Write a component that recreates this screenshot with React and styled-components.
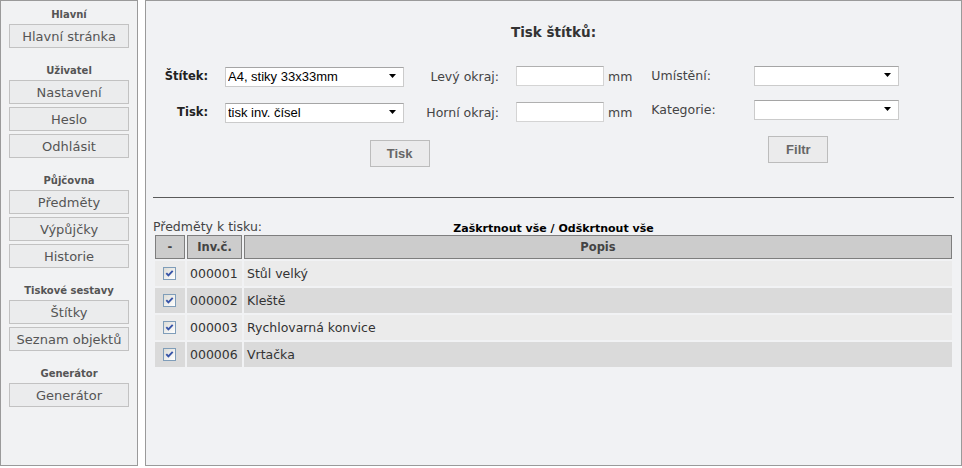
import React from 'react';
import styled, { createGlobalStyle } from 'styled-components';

const GlobalStyle = createGlobalStyle`
  html, body {
    margin: 0;
    padding: 0;
    background: #ffffff;
    font-family: "DejaVu Sans", Verdana, sans-serif;
  }
  * { box-sizing: border-box; }
`;

const Page = styled.div`
  display: flex;
  gap: 7px;
  height: 466px;
`;

const Sidebar = styled.nav`
  width: 138px;
  flex-shrink: 0;
  background: #f1f2f3;
  border: 1px solid #9a9a9a;
  padding: 7px 0 0;
  display: flex;
  flex-direction: column;
  gap: 16px;
`;

const Section = styled.div`
  display: flex;
  flex-direction: column;
  align-items: center;
  gap: 3px;
`;

const SectionTitle = styled.div`
  font-size: 10px;
  font-weight: bold;
  line-height: 14px;
  height: 14px;
  color: #555;
  margin-bottom: -1px;
`;

const NavButton = styled.button`
  width: 120px;
  height: 24px;
  padding: 0;
  background: #ebeced;
  border: 1px solid #c2c2c2;
  font-family: "DejaVu Sans", Verdana, sans-serif;
  font-size: 13px;
  color: #555;
  cursor: pointer;
`;

const Main = styled.main`
  flex: 1;
  background: #f1f2f4;
  border: 1px solid #9a9a9a;
  padding: 22px 7px 0;
`;

const Title = styled.h1`
  margin: 0;
  text-align: center;
  font-size: 13.5px;
  line-height: 18px;
  font-weight: bold;
  color: #333;
`;

const Forms = styled.div`
  display: flex;
  align-items: flex-start;
  gap: 19px;
  margin-top: 25px;
  padding-left: 14px;
  height: 101px;
`;

const LeftForm = styled.div`
  display: grid;
  grid-template-columns: 41px 179px 78px auto;
  grid-template-rows: 20px 20px auto;
  column-gap: 17px;
  row-gap: 16px;
  align-items: center;
`;

const RightForm = styled.div`
  display: grid;
  grid-template-columns: 103px 145px;
  grid-template-rows: 20px 20px auto;
  row-gap: 14px;
  align-items: center;
  margin-top: -1px;
`;

const BoldLabel = styled.label`
  justify-self: end;
  white-space: nowrap;
  font-size: 11.5px;
  font-weight: bold;
  color: #222;
`;

const Label = styled.label`
  justify-self: ${p => (p.$left ? 'start' : 'end')};
  white-space: nowrap;
  font-size: 12.5px;
  color: #444;
`;

const SelectWrap = styled.div`
  position: relative;
  height: 20px;
`;

const Select = styled.select`
  appearance: none;
  width: 100%;
  height: 20px;
  margin: 0;
  padding: 0 0 0 2px;
  background: #fff;
  border: 1px solid #cbcbcb;
  border-top-color: #a5a5a5;
  border-radius: 0;
  font-family: "Liberation Sans", Arial, sans-serif;
  font-size: 13px;
  color: #000;
`;

const Arrow = styled.svg`
  position: absolute;
  right: 8px;
  top: 8px;
  pointer-events: none;
`;

const InputCell = styled.div`
  display: flex;
  align-items: center;
  gap: 4px;
`;

const Input = styled.input`
  width: 88px;
  height: 20px;
  margin: 0;
  background: #fff;
  border: 1px solid #d4d4d4;
  border-top-color: #b0b0b0;
`;

const Unit = styled.span`
  font-size: 12.5px;
  color: #444;
`;

const FormButton = styled.button`
  width: 60px;
  height: 27px;
  padding: 0;
  background: #ebebec;
  border: 1px solid #bcbcbc;
  font-family: "Liberation Sans", Arial, sans-serif;
  font-size: 13px;
  font-weight: bold;
  color: #666;
  cursor: pointer;
  grid-column: ${p => p.$column};
  justify-self: ${p => p.$justify};
  margin-left: ${p => p.$offset || 0}px;
  margin-top: ${p => p.$top || 0}px;
`;

const Rule = styled.hr`
  margin: 30px 0 0;
  border: 0;
  border-top: 1px solid #5a5a5a;
  height: 0;
`;

const CaptionRow = styled.div`
  position: relative;
  margin-top: 22px;
  height: 13px;
  line-height: 13px;
  text-align: center;
`;

const Caption = styled.span`
  position: absolute;
  left: 0;
  top: 0;
  font-size: 12.5px;
  color: #444;
`;

const SelectAll = styled.a`
  font-size: 11px;
  font-weight: bold;
  color: #000;
  text-decoration: none;
  cursor: pointer;
`;

const Table = styled.table`
  width: 100%;
  border-collapse: separate;
  border-spacing: 2px;
`;

const Th = styled.th`
  height: 24px;
  padding: 0;
  background: #cccccc;
  border: 1px solid #7e7e7e;
  font-size: 11.5px;
  font-weight: bold;
  color: #444;
  width: ${p => p.$width || 'auto'};
`;

const Td = styled.td`
  height: 25px;
  padding: 0 2px 0 3px;
  background: ${p => (p.$even ? '#dadada' : '#ebebeb')};
  font-size: 12.5px;
  color: #333;
  text-align: ${p => (p.$center ? 'center' : 'left')};
  line-height: 25px;
`;

const Check = styled.span`
  display: inline-flex;
  align-items: center;
  justify-content: center;
  width: 13px;
  height: 13px;
  vertical-align: middle;
  margin: -3px 2px 0 0;
  border: 1px solid #7f9db9;
  background: linear-gradient(135deg, #dcdcd7, #ffffff);

  svg {
    display: block;
  }
`;

const Checkbox = () => (
  <Check>
    <svg width="11" height="11" viewBox="0 0 11 11">
      <path d="M2.3 5.2 L4.4 7.4 L8.7 2.9" fill="none" stroke="#3754a8" strokeWidth="1.9" />
    </svg>
  </Check>
);

const DropArrow = () => (
  <Arrow width="7" height="4" viewBox="0 0 7 4">
    <path d="M0 0 H7 L3.5 4 Z" fill="#000" />
  </Arrow>
);

const DropDown = ({ value }) => (
  <SelectWrap>
    <Select defaultValue={value}>
      <option>{value}</option>
    </Select>
    <DropArrow />
  </SelectWrap>
);

const nav = [
  { title: 'Hlavní', items: ['Hlavní stránka'] },
  { title: 'Uživatel', items: ['Nastavení', 'Heslo', 'Odhlásit'] },
  { title: 'Půjčovna', items: ['Předměty', 'Výpůjčky', 'Historie'] },
  { title: 'Tiskové sestavy', items: ['Štítky', 'Seznam objektů'] },
  { title: 'Generátor', items: ['Generátor'] },
];

const rows = [
  { id: '000001', name: 'Stůl velký' },
  { id: '000002', name: 'Kleště' },
  { id: '000003', name: 'Rychlovarná konvice' },
  { id: '000006', name: 'Vrtačka' },
];

const App = () => {
  return (
    <>
      <GlobalStyle />
      <Page>
        <Sidebar>
          {nav.map(section => (
            <Section key={section.title}>
              <SectionTitle>{section.title}</SectionTitle>
              {section.items.map(item => (
                <NavButton key={item}>{item}</NavButton>
              ))}
            </Section>
          ))}
        </Sidebar>
        <Main>
          <Title>Tisk štítků:</Title>
          <Forms>
            <LeftForm>
              <BoldLabel>Štítek:</BoldLabel>
              <DropDown value="A4, stiky 33x33mm" />
              <Label>Levý okraj:</Label>
              <InputCell>
                <Input type="text" />
                <Unit>mm</Unit>
              </InputCell>
              <BoldLabel>Tisk:</BoldLabel>
              <DropDown value="tisk inv. čísel" />
              <Label>Horní okraj:</Label>
              <InputCell>
                <Input type="text" />
                <Unit>mm</Unit>
              </InputCell>
              <FormButton $column="1 / -1" $justify="center" $top={2}>Tisk</FormButton>
            </LeftForm>
            <RightForm>
              <Label $left>Umístění:</Label>
              <DropDown value="" />
              <Label $left>Kategorie:</Label>
              <DropDown value="" />
              <FormButton $column="2" $justify="start" $offset={14} $top={3}>Filtr</FormButton>
            </RightForm>
          </Forms>
          <Rule />
          <CaptionRow>
            <Caption>Předměty k tisku:</Caption>
            <SelectAll>Zaškrtnout vše / Odškrtnout vše</SelectAll>
          </CaptionRow>
          <Table>
            <thead>
              <tr>
                <Th $width="30px">-</Th>
                <Th $width="55px">Inv.č.</Th>
                <Th>Popis</Th>
              </tr>
            </thead>
            <tbody>
              {rows.map((row, i) => (
                <tr key={row.id}>
                  <Td $even={i % 2 === 1} $center>
                    <Checkbox />
                  </Td>
                  <Td $even={i % 2 === 1}>{row.id}</Td>
                  <Td $even={i % 2 === 1}>{row.name}</Td>
                </tr>
              ))}
            </tbody>
          </Table>
        </Main>
      </Page>
    </>
  );
};

export default App;
